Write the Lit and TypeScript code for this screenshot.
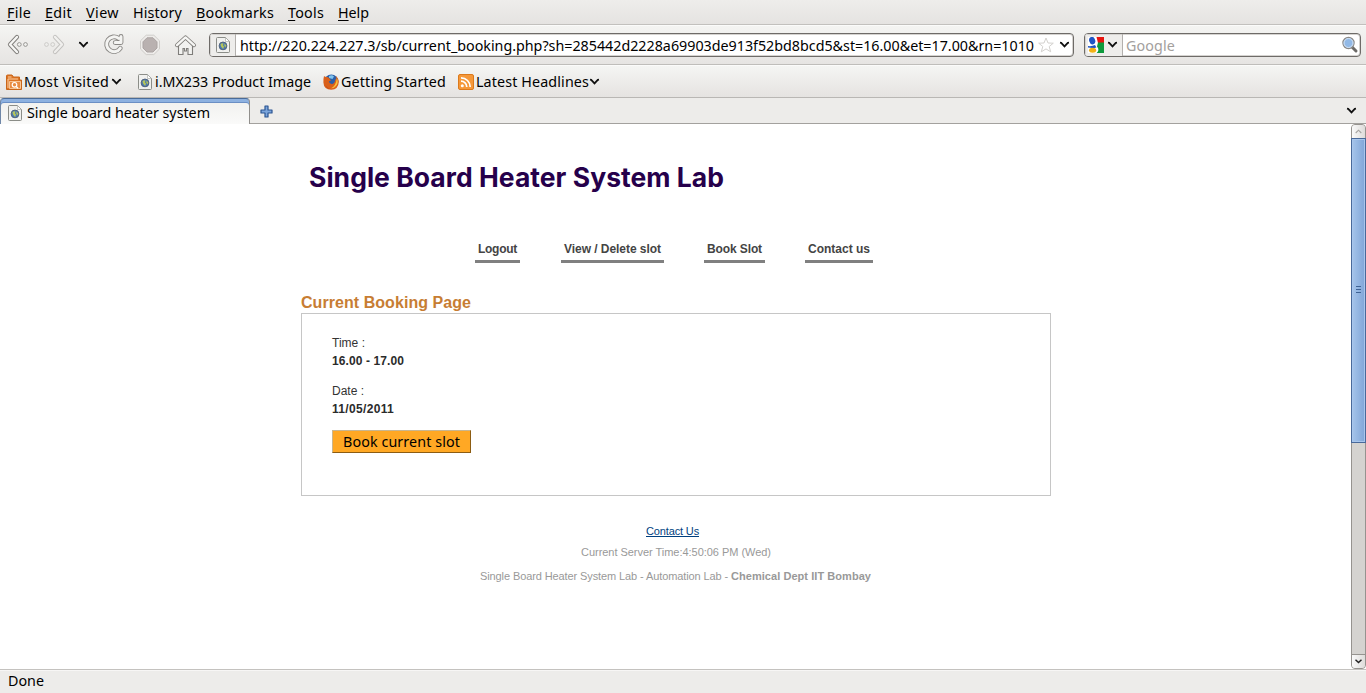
import { LitElement, html, css, svg } from "lit";
import { customElement, property } from "lit/decorators.js";

/** Inline text whose letter spacing is computed so that it fills a given advance width. */
@customElement("fit-text")
class FitText extends LitElement {
  @property({ type: Number }) span = 0;
  static styles = css`
    :host { display: inline-block; white-space: pre; flex: none; }
    .t { display: inline-block; text-decoration: inherit; }
  `;
  render() {
    return html`<span class="t"><slot></slot></span>`;
  }
  firstUpdated() {
    const t = this.renderRoot.querySelector(".t") as HTMLElement;
    const n = (this.textContent || "").length;
    const natural = t.getBoundingClientRect().width;
    if (n && natural) this.style.letterSpacing = `${(this.span - natural) / n}px`;
    this.style.width = `${this.span}px`;
  }
}

const chevron = html`<svg class="chev" width="11" height="8" viewBox="0 0 11 8">
  <path d="M1 1.7L2.2 1.9L5.5 5.4L8.8 1.9L10 1.7" fill="none" stroke="#111" stroke-width="1.8" />
</svg>`;

const pageIcon = html`<svg class="pg" width="14" height="16" viewBox="0 0 14 16">
  <path d="M1.5 .5H9.5L13.5 4.5V14.5Q13.5 15.5 12.5 15.5H1.5Q.5 15.5 .5 14.5V1.5Q.5 .5 1.5 .5Z" fill="#f1f1ef" stroke="#8b8d88" />
  <path d="M9.5 .8V4.5H13.2" fill="#fff" stroke="#b5b6b2" stroke-width=".8" />
  <circle cx="7" cy="8.9" r="3.9" fill="#4b78b4" stroke="#4e5e74" stroke-width=".9" />
  <path d="M4.6 7Q6.4 5.6 7.6 6.8L6.8 8.2L8 9.4L7.2 12Q5 10.6 4.6 8Z" fill="#b6c65a" />
  <path d="M8.4 6.6L10.2 8.2L9.6 10.4L8.4 9Z" fill="#b0c257" />
</svg>`;

@customElement("app-root")
class AppRoot extends LitElement {
  static styles = css`
    :host {
      display: flex; flex-direction: column; width: 1366px; height: 693px; overflow: hidden;
      background: #fff; color: #000; font: 14.3px/20px "Noto Sans", "Open Sans", sans-serif;
    }
    * { box-sizing: border-box; }
    svg { display: block; flex: none; }
    .menubar {
      display: flex; gap: 14px; height: 25px; flex: none; padding: 3px 7px 0;
      background: linear-gradient(#eeedeb, #e5e3e1); border-bottom: 1px solid #c2c0bd;
    }
    .u { text-decoration: underline; text-decoration-thickness: 1px; text-underline-offset: 2px; }
    .nav {
      display: flex; height: 40px; flex: none; padding: 7px 5px 0 5px;
      background: linear-gradient(#f4f4f2, #e6e4e2); border-top: 1px solid #fbfbfa; border-bottom: 1px solid #bfbdba;
    }
    .tools { display: grid; grid-template-columns: 38px 35px 24px 36px 35px 36px; height: 23px; align-items: center; flex: none; }
    .field {
      display: flex; align-items: center; height: 24px; background: #fff; border: 1px solid #6e6b68;
      border-radius: 4px; box-shadow: inset 0 0 0 1px #d5d3d0; overflow: hidden; flex: none;
    }
    .url { width: 865px; }
    .search { width: 277px; margin-left: 10px; }
    .cap { display: flex; align-items: center; height: 22px; background: #eeedeb; border-right: 1px solid #b3b0ad; box-shadow: inset 1px 1px #d5d3d0; flex: none; }
    .url .cap { width: 26px; padding-left: 6px; }
    .url fit-text { margin-left: 4px; margin-right: 4px; padding-top: 1px; }
    .url .star { margin-right: 5px; }
    .search .cap { width: 38px; padding-left: 3px; gap: 3px; }
    .search fit-text { color: #a3a09d; margin: 0 auto 0 3px; padding-top: 1px; }
    .search .mag { margin-right: 1px; }
    .marks {
      display: flex; align-items: center; height: 33px; flex: none; padding-left: 5px;
      background: linear-gradient(#f5f5f3, #e5e3e1); border-top: 1px solid #fbfbfa; border-bottom: 1px solid #b9b7b4;
    }
    .mark { display: flex; align-items: center; }
    .m1 { width: 133px; gap: 2px; padding-left: 1px; }
    .m2 { width: 185px; gap: 3px; }
    .m3 { width: 135px; gap: 2px; }
    .m4 { gap: 2px; }
    .m4 .chev { margin-left: -2px; }
    .tabs { display: flex; height: 26px; flex: none; background: #edecea; border-bottom: 1px solid #a3a19e; }
    .tab {
      display: flex; align-items: center; gap: 5px; width: 250px; height: 26px; padding: 3px 0 0 7px;
      background: linear-gradient(#f0f0ee, #fafaf9); border: 1px solid #918f8c; border-top: 1px solid #4a6b98; border-bottom: 0; border-left-color: #6f87a8;
      border-radius: 4px 4px 0 0; box-shadow: inset 0 3px #8db1e0, inset 0 4px #6b8fc4; flex: none;
    }
    .plus { margin: 7px 0 0 9.5px; }
    .tabs > .chev { margin: 9px 9px 0 auto; }
    .view { display: flex; flex: 1; min-height: 0; background: #fff; }
    .page { flex: 1; padding-left: 301px; font-family: "Liberation Sans", Arial, sans-serif; font-size: 12px; line-height: 18px; color: #333; }
    .col { display: flex; flex-direction: column; width: 750px; }
    h1 { margin: 35px 0 0 8px; font: 700 26.5px/36px Inter, Lato, sans-serif; color: #26004b; height: 36px; }
    .links { display: flex; margin: 45px 0 0 174px; height: 23px; font-weight: 700; color: #444; }
    .links a { display: block; padding: 0 3px; border-bottom: 3px solid #808080; }
    .links a:nth-child(1) { margin-right: 41px; }
    .links a:nth-child(2), .links a:nth-child(3) { margin-right: 40px; }
    h2 { margin: 30px 0 0; height: 20px; font-size: 16px; line-height: 20px; color: #c77d33; }
    .box { height: 183px; border: 1px solid #c6c6c6; padding: 20px 30px 0; }
    .pair { display: flex; flex-direction: column; align-items: flex-start; margin-bottom: 12px; height: 36px; }
    .pair b { color: #2b2b2b; }
    button {
      display: block; width: 139px; height: 23px; padding: 0 0 0 10px; text-align: left; background: #ffa824; color: #000;
      border: 1px solid; border-color: #c9b690 #8c5c12 #8c5c12 #c9b690; font: 14.3px/20px "Noto Sans", sans-serif;
    }
    footer { display: flex; flex-direction: column; align-items: center; margin-top: 26px; font-size: 11px; line-height: 18px; color: #999; }
    footer a { margin-right: 7px; color: #003f7f; }
    footer a fit-text { text-decoration: underline; }
    footer .s { margin-top: 3px; }
    footer .d { margin: 6px 1px 0 0; display: flex; }
    .bar { display: flex; flex-direction: column; width: 15px; height: 545px; flex: none; background: #d5d3d0; border: 1px solid #96938f; border-radius: 4px; }
    .btn { display: flex; align-items: center; justify-content: center; height: 13px; flex: none; background: linear-gradient(90deg, #fafafa, #dedcda); }
    .up { border-radius: 3px 3px 0 0; }
    .down { margin-top: auto; height: 14px; border-top: 1px solid #96938f; border-radius: 0 0 3px 3px; }
    .thumb {
      display: flex; flex-direction: column; align-items: center; justify-content: center; gap: 2px; height: 305px; margin: 0 -1px; padding-bottom: 2px;
      border: 1px solid #49699a; background: linear-gradient(90deg, #a5c4ea, #80a5d8); box-shadow: inset 0 0 0 1px #a8c6ec; flex: none;
    }
    .thumb i { width: 5px; height: 1px; background: #3f6395; }
    .status { height: 24px; flex: none; border-top: 1px solid #c4c2bf; background: #edecea; padding: 1px 8px; box-shadow: inset 0 1px #f7f6f5; }
  `;

  menu(items: [string, string, string, number][]) {
    return items.map(([a, k, b, w]) => html`<fit-text span=${w}>${a}<span class="u">${k}</span>${b}</fit-text>`);
  }

  arrow(flip: boolean) {
    const g = svg`<path d="M10 3L3 10.5L10 18" fill="none" stroke="#7f7d7a" stroke-width="4.2" stroke-linejoin="round" stroke-linecap="round"/>
      <path d="M10 3L3 10.5L10 18" fill="none" stroke="#f6f6f4" stroke-width="2.4" stroke-linejoin="round" stroke-linecap="round"/>
      <circle cx="12.3" cy="10.5" r="1.9" fill="#f2f2f0" stroke="#8f8d8a" stroke-width=".9"/>
      <circle cx="18.5" cy="10.5" r="1.9" fill="#f2f2f0" stroke="#8f8d8a" stroke-width=".9"/>`;
    return html`<svg width="24" height="21" viewBox="-2 0 24 21">
      ${flip ? svg`<g opacity=".38" transform="translate(20 0) scale(-1 1)">${g}</g>` : g}</svg>`;
  }

  render() {
    return html`
      <div class="menubar">
        ${this.menu([["", "F", "ile", 24], ["", "E", "dit", 27], ["", "V", "iew", 33], ["Hi", "s", "tory", 49], ["", "B", "ookmarks", 78], ["", "T", "ools", 36], ["", "H", "elp", 31]])}
      </div>
      <div class="nav">
        <div class="tools">
          ${this.arrow(false)} ${this.arrow(true)} ${chevron}
          <svg width="24" height="23" viewBox="0 0 24 23">
            <path d="M18.3 15.2A7.4 7.4 0 1 1 16.6 5.4M19 3.4V9.6H13.2" fill="none" stroke="#8a8885" stroke-width="4.8" stroke-linecap="round" stroke-linejoin="round" />
            <path d="M18.3 15.2A7.4 7.4 0 1 1 16.6 5.4M19 3.4V9.6H13.2" fill="none" stroke="#f4f4f2" stroke-width="3" stroke-linecap="round" stroke-linejoin="round" />
          </svg>
          <svg width="24" height="22" viewBox="0 0 24 22">
            <path d="M8.2 1.2H15.8L21.5 6.8V15L15.8 20.6H8.2L2.5 15V6.8Z" fill="#eeecea" stroke="#cfcdca" />
            <path d="M9 3.8H15L19 7.8V14L15 18H9L5 14V7.8Z" fill="#b9b1b0" stroke="#aba4a3" />
          </svg>
          <svg width="24" height="22" viewBox="0 0 24 22">
            <path d="M5.5 10V20.5H10V14.5H11.5V17H13.5V14.5H15V20.5H19.5V10L12.5 5Z" fill="#f2f2f0" stroke="#7f7d7a" stroke-width="1.1" />
            <path d="M4 11.2L12.5 3.4L21 11.2" fill="none" stroke="#7f7d7a" stroke-width="4" stroke-linecap="round" stroke-linejoin="round" />
            <path d="M4 11.2L12.5 3.4L21 11.2" fill="none" stroke="#f6f6f4" stroke-width="2.3" stroke-linecap="round" stroke-linejoin="round" />
          </svg>
        </div>
        <div class="field url">
          <div class="cap">${pageIcon}</div>
          <fit-text span="794">http://220.224.227.3/sb/current_booking.php?sh=285442d2228a69903de913f52bd8bcd5&st=16.00&et=17.00&rn=1010</fit-text>
          <svg class="star" width="16" height="16" viewBox="0 0 16 16">
            <path d="M8 1L10 6L15.3 6.2L11.2 9.5L12.7 14.8L8 11.9L3.3 14.8L4.8 9.5L.7 6.2L6 6Z" fill="#fff" stroke="#d3d1ce" />
          </svg>
          ${chevron}
        </div>
        <div class="field search">
          <div class="cap">
            <svg width="16" height="16" viewBox="0 0 16 16">
              <rect width="16" height="16" fill="#fff" />
              <path d="M8.5 0H16V6H10Z" fill="#e8150f" />
              <path d="M10 5.5H16V16H8.6Q12 13 9 9.5Z" fill="#0d9a3c" />
              <ellipse cx="4.2" cy="3.6" rx="3" ry="3.8" fill="#1f55c4" transform="rotate(-18 4.2 3.6)" />
              <path d="M0 9Q4 9.6 7 8L8.4 10.4Q5 11.4 0 10.6Z" fill="#1f55c4" />
              <ellipse cx="4.6" cy="13.3" rx="3.6" ry="2.5" fill="#f2b216" />
            </svg>
            ${chevron}
          </div>
          <fit-text span="49">Google</fit-text>
          <svg class="mag" width="18" height="18" viewBox="0 0 18 18">
            <path d="M11 11L15 15" stroke="#6c6a67" stroke-width="3" stroke-linecap="round" />
            <circle cx="7.5" cy="7" r="5.6" fill="#92b9e6" stroke="#8b8986" stroke-width="1.2" />
            <circle cx="7.5" cy="7" r="4.5" fill="none" stroke="#d5e4f5" stroke-width="1" />
          </svg>
        </div>
      </div>
      <div class="marks">
        <div class="mark m1">
          <svg width="16" height="16" viewBox="0 0 16 16">
            <path d="M.5 15.5V2Q.5 1 1.5 1H6L7.5 3H13.5V6H15.5V15.5Z" fill="#dd7525" stroke="#c9661a" />
            <path d="M2 3H5.5M2 5H12M2 5V14" stroke="#f9cfa5" />
            <path d="M3.5 7.5H14.5V14.5H3.5Z" fill="#e98c42" stroke="#f8c594" />
            <circle cx="8.5" cy="10.8" r="2.3" fill="none" stroke="#fff" stroke-width="1.2" />
            <path d="M10.2 12.5L12 14.2" stroke="#fff" stroke-width="1.3" />
          </svg>
          <fit-text span="85">Most Visited</fit-text>${chevron}
        </div>
        <div class="mark m2">${pageIcon}<fit-text span="156">i.MX233 Product Image</fit-text></div>
        <div class="mark m3">
          <svg width="16" height="16" viewBox="0 0 16 16">
            <circle cx="8.3" cy="7.4" r="7" fill="#2c5fa8" />
            <path d="M6 2Q9 .5 11 2.5L9.5 5L6 4Z" fill="#7fc3ee" />
            <path d="M1 2Q2 3 3.2 3Q5 2.5 6 4L8 6.6L5.8 7.6Q6.5 10.4 9.4 10Q12.4 9 12 5Q13 5.6 13.3 7Q13.8 4.4 12.6 2Q15.8 4.4 15.8 8Q15.4 15.4 8.2 15.8Q.8 15.4 .4 8.4Q.3 4.6 1 2Z" fill="#d9601b" />
            <path d="M13.8 4.2Q15.6 7 14 10.6Q12 14.4 8 14.2Q13 12 13.8 4.2Z" fill="#f8c33a" />
            <path d="M1.4 8.5Q2 13 7 14.8Q2.5 14.6 1.4 8.5Z" fill="#b83a12" />
          </svg>
          <fit-text span="105">Getting Started</fit-text>
        </div>
        <div class="mark m4">
          <svg width="16" height="16" viewBox="0 0 16 16">
            <rect x=".5" y=".5" width="15" height="15" rx="1.5" fill="#f5983a" stroke="#dc7a1c" />
            <circle cx="4.3" cy="11.7" r="1.5" fill="#fff" />
            <path d="M3 7.2A5.8 5.8 0 0 1 8.8 13M3 3.8A9.2 9.2 0 0 1 12.2 13" fill="none" stroke="#fff" stroke-width="1.7" />
          </svg>
          <fit-text span="113">Latest Headlines</fit-text>${chevron}
        </div>
      </div>
      <div class="tabs">
        <div class="tab">${pageIcon}<fit-text span="183">Single board heater system</fit-text></div>
        <svg class="plus" width="13" height="13" viewBox="0 0 13 13">
          <path d="M5 1H8V5H12V8H8V12H5V8H1V5H5Z" fill="#7ba5dc" stroke="#2b5592" stroke-width="1.2" stroke-linejoin="round" />
        </svg>
        ${chevron}
      </div>
      <div class="view">
        <div class="page">
          <div class="col">
            <h1><fit-text span="415">Single Board Heater System Lab</fit-text></h1>
            <nav class="links">
              <a><fit-text span="39">Logout</fit-text></a>
              <a><fit-text span="97">View / Delete slot</fit-text></a>
              <a><fit-text span="55">Book Slot</fit-text></a>
              <a><fit-text span="62">Contact us</fit-text></a>
            </nav>
            <h2><fit-text span="170">Current Booking Page</fit-text></h2>
            <div class="box">
              <div class="pair"><fit-text span="33">Time :</fit-text><b><fit-text span="72">16.00 - 17.00</fit-text></b></div>
              <div class="pair"><fit-text span="32">Date :</fit-text><b><fit-text span="62">11/05/2011</fit-text></b></div>
              <button><fit-text span="117">Book current slot</fit-text></button>
            </div>
            <footer>
              <a><fit-text span="53">Contact Us</fit-text></a>
              <div class="s"><fit-text span="190">Current Server Time:4:50:06 PM (Wed)</fit-text></div>
              <div class="d"><fit-text span="251">Single Board Heater System Lab - Automation Lab - </fit-text><b><fit-text span="140">Chemical Dept IIT Bombay</fit-text></b></div>
            </footer>
          </div>
        </div>
        <div class="bar">
          <div class="btn up">
            <svg width="7" height="5" viewBox="0 0 7 5"><path d="M.7 4L3.5 1.2L6.3 4" fill="none" stroke="#a5a3a0" stroke-width="1.1" /></svg>
          </div>
          <div class="thumb"><i></i><i></i><i></i></div>
          <div class="btn down">
            <svg width="7" height="5" viewBox="0 0 7 5"><path d="M.5 .8L3.5 3.5L6.5 .8" fill="none" stroke="#222" stroke-width="1.5" /></svg>
          </div>
        </div>
      </div>
      <div class="status"><fit-text span="36">Done</fit-text></div>
    `;
  }
}
